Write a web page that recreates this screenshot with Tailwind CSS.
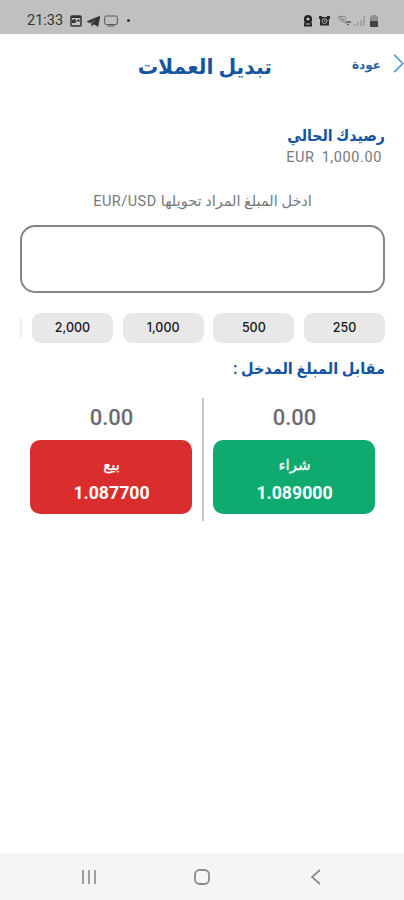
<!DOCTYPE html>
<html lang="ar" dir="rtl">
<head>
<meta charset="utf-8">
<title>تبديل العملات</title>
<script src="https://cdn.jsdelivr.net/npm/@tailwindcss/browser@4"></script>
</head>
<body class="bg-white">
<div class="flex h-[900px] w-[404px] flex-col overflow-hidden bg-white font-[Roboto,'DejaVu_Sans',sans-serif]">
  <div dir="ltr" class="flex h-[34px] shrink-0 items-center justify-between bg-[#c0c0c0] pt-[7px] pr-[25px] pl-[27px] text-[#333]">
    <div class="flex items-center">
      <span class="w-[43px] text-[14.5px] leading-4">21:33</span>
      <svg class="size-3" viewBox="0 0 12 12"><rect x="1" y="1" width="10" height="10" rx="1" fill="none" stroke="currentColor" stroke-width="1.5"/><path d="M1 1h10v2H1ZM2 8V5l3-1 1 2 3-2 1 3-3-1-2 2Z" fill="currentColor"/></svg>
      <svg class="ml-[5px] h-3 w-[13px]" viewBox="0 0 13 12"><path d="M0 6.5 13 1 11 11.5 7 9 5 11 4.500 8.500 10 4 3 8Z" fill="currentColor" stroke="currentColor" stroke-width=".5"/></svg>
      <svg class="ml-[4px] h-3 w-[14px]" viewBox="0 0 14 12"><rect x=".7" y="1" width="12.600" height="8.500" rx="1.500" fill="none" stroke="#555"/><path d="M3.500 11h7" stroke="#555"/></svg>
      <span class="ml-[9px] size-[3px] rounded-full bg-[#333]"></span>
    </div>
    <div class="flex items-center">
      <svg class="h-3 w-2.5" viewBox="0 0 10 12"><path d="M5 0a4 4 0 0 1 4 4v2L8 7l1 1v3.500H1V8l1-1-1-1V4a4 4 0 0 1 4-4Z" fill="#222"/><circle cx="5" cy="4" r="1.600" fill="#c0c0c0"/><path d="M2.500 9h5" stroke="#c0c0c0"/></svg>
      <svg class="ml-[6px] size-[11px]" viewBox="0 0 11 11"><path d="M0 1h3v1h5V1h3v3h-1v6.500H1V4H0Z" fill="#2d2d2d"/><circle cx="5.500" cy="6" r="2.500" fill="none" stroke="#c0c0c0" stroke-width=".8"/><path d="M5.500 4.500V6H7" fill="none" stroke="#c0c0c0" stroke-width=".7"/></svg>
      <svg class="ml-[7px] h-[11px] w-[15px]" viewBox="0 0 15 11" fill="none" stroke="#858585"><path d="M0 3Q5-.5 10 3M2 5q4-2 7 0M4 7q2-1 4 0M2 1l7 8"/><path d="M9 7h5M10 9l2 1" stroke="#555" stroke-width="1.300"/></svg>
      <svg class="ml-[2px] h-3 w-[11px]" viewBox="0 0 11 12" stroke="#909090" stroke-width="1.200"><path d="M1 9v2M4 7v4M7 5v6"/><path d="M10 1v10"/></svg>
      <svg class="mr-[1px] ml-[5px] h-3 w-2" viewBox="0 0 8 12"><path d="M2 0h4v1h1q1 0 1 1v9q0 1-1 1H1q-1 0-1-1V2q0-1 1-1h1Z" fill="#909090"/><path d="M0 6h8v5q0 1-1 1H1q-1 0-1-1Z" fill="#444"/></svg>
    </div>
  </div>

  <header class="grid h-[62px] shrink-0 grid-cols-[72px_60px_134px] items-center">
    <div class="flex items-center gap-[12px] pb-[4px]">
      <svg class="h-[19px] w-[11px] shrink-0" viewBox="0 0 11 20"><path d="m1 1 9 9-9 9" fill="none" stroke="#5599d2" stroke-width="1.800"/></svg>
      <span class="pt-1 text-[12px] font-bold leading-5 text-[#2860a5]">عودة</span>
    </div>
    <span></span>
    <h1 class="origin-right scale-x-[.97] pt-[3px] text-[21px] font-bold leading-8 whitespace-nowrap text-[#1554a3]">تبديل العملات</h1>
  </header>

  <main class="flex grow flex-col pr-[19px] pl-[20px]">
    <h2 class="mt-[28px] h-6 origin-right scale-x-[.885] text-[16px] font-bold leading-6 whitespace-nowrap text-[#1554a3]">رصيدك الحالي</h2>
    <div dir="ltr" class="flex h-5 justify-end gap-[7px] pr-[3px] text-[14.500px] leading-5 tracking-[.6px] text-[#77797b]"><span>EUR</span><span>1,000.00</span></div>
    <p class="mt-[24px] flex h-5 justify-center gap-[4px] text-[14.500px] leading-5 whitespace-nowrap text-[#77797b]"><span>ادخل المبلغ المراد تحويلها</span><span class="text-[14.500px] tracking-[.5px]">EUR/USD</span></p>
    <input aria-label="المبلغ" class="mt-[13px] h-[68px] w-[365px] shrink-0 rounded-[15px] border-2 border-[#838486] bg-white px-4">
    <div class="mt-[20px] flex h-[30px] w-[365px] shrink-0 items-center gap-[9.700px] overflow-hidden font-[Inter,sans-serif] text-[12.500px] font-medium leading-[30px] text-[#171717]">
      <button class="w-[81px] shrink-0 rounded-[9px] bg-[#e8e8e8]">250</button>
      <button class="w-[81px] shrink-0 rounded-[9px] bg-[#e8e8e8]">500</button>
      <button class="w-[81px] shrink-0 rounded-[9px] bg-[#e8e8e8]">1,000</button>
      <button class="w-[81px] shrink-0 rounded-[9px] bg-[#e8e8e8]">2,000</button>
      <span class="h-5 w-[3px] shrink-0 bg-[#eeeeee]"></span>
    </div>
    <h2 class="mt-[14px] h-6 origin-right scale-x-[.905] text-[16px] font-bold leading-6 whitespace-nowrap text-[#1554a3]">مقابل المبلغ المدخل :</h2>
    <div class="mt-[17px] flex h-[123px] pr-[10px]">
      <div class="flex w-[162px] flex-col text-center">
        <span class="h-[42px] pt-1 pl-[1px] text-[22px] font-medium leading-8 text-[#696b70]">0.00</span>
        <button class="flex h-[74px] flex-col items-center rounded-[10px] bg-[#0eaa70] pt-[13px] pl-[1px] text-white"><span class="text-[15px] font-medium leading-6 [-webkit-text-stroke:.3px_white]">شراء</span><span class="text-[17.700px] font-bold leading-8">1.089000</span></button>
      </div>
      <span class="mr-[9px] ml-[10px] w-[2px] bg-[#c9c9c9]"></span>
      <div class="flex w-[162px] flex-col text-center">
        <span class="h-[42px] pt-1 pl-[1px] text-[22px] font-medium leading-8 text-[#696b70]">0.00</span>
        <button class="flex h-[74px] flex-col items-center rounded-[10px] bg-[#d92d2e] pt-[13px] pl-[1px] text-white"><span class="text-[15px] font-medium leading-6 [-webkit-text-stroke:.3px_white]">بيع</span><span class="text-[17.700px] font-bold leading-8">1.087700</span></button>
      </div>
    </div>
  </main>

  <nav dir="ltr" class="flex h-[47px] shrink-0 items-center bg-[#f5f5f5] pl-[81px] text-[#8b8b8b]">
    <svg class="size-4" viewBox="0 0 16 16"><path d="M2 1v14M8 1v14M14 1v14" stroke="currentColor" stroke-width="1.600"/></svg>
    <svg class="ml-[97px] size-4" viewBox="0 0 16 16"><rect x="1" y="1" width="14" height="14" rx="4.500" fill="none" stroke="currentColor" stroke-width="1.800"/></svg>
    <svg class="ml-[100px] h-4 w-3" viewBox="0 0 12 16"><path d="m10 1-8 7 8 7" fill="none" stroke="currentColor" stroke-width="1.700"/></svg>
  </nav>
</div>
</body>
</html>
